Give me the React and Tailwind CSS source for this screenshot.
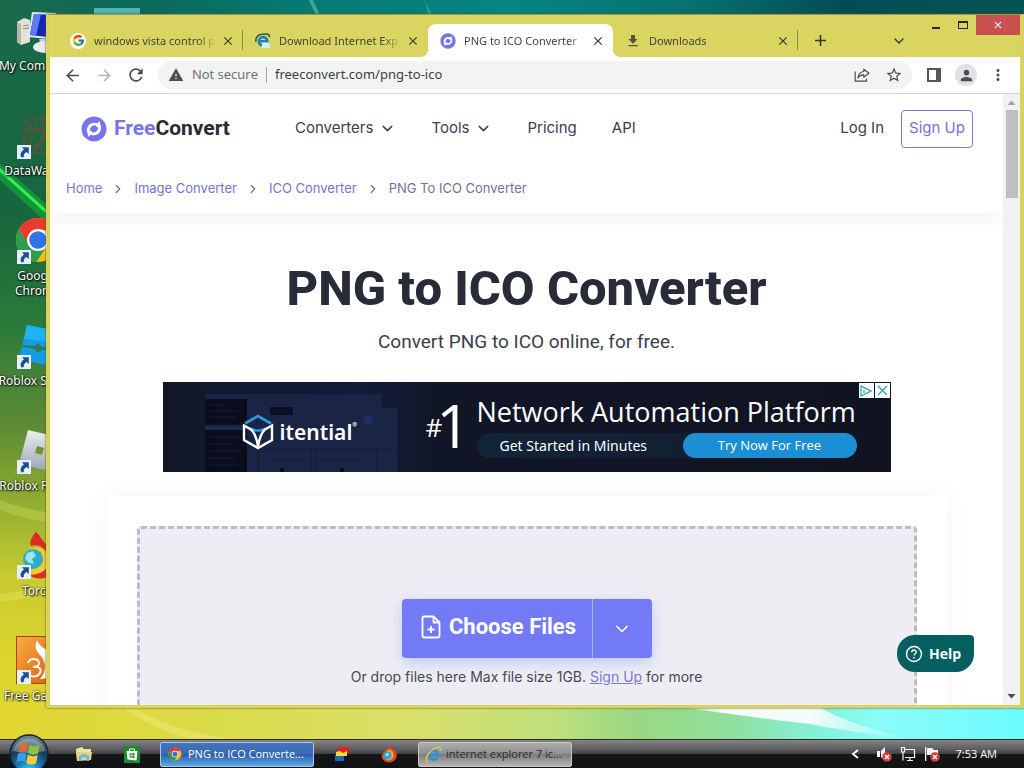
import React from "react";
import {
  MdArrowBack, MdArrowForward, MdRefresh, MdWarning, MdStarBorder, MdPerson,
  MdMoreVert, MdDownload, MdClose, MdAdd,
} from "react-icons/md";
import { FcGoogle } from "react-icons/fc";
import { ChevronDown, ChevronRight } from "lucide-react";

function Wallpaper() {
  return (
    <svg className="absolute inset-0 h-full w-full" viewBox="0 0 1024 768" preserveAspectRatio="none" aria-hidden="true">
      <defs>
        <linearGradient id="wpLeft" x1="0" y1="0" x2="0" y2="1">
          <stop offset="0" stopColor="#1a6a4b" />
          <stop offset="0.28" stopColor="#17663f" />
          <stop offset="0.42" stopColor="#2b7a3b" />
          <stop offset="0.56" stopColor="#5f8c35" />
          <stop offset="0.66" stopColor="#94b030" />
          <stop offset="0.75" stopColor="#c8ca30" />
          <stop offset="0.85" stopColor="#dcd42e" />
          <stop offset="1" stopColor="#e2d630" />
        </linearGradient>
        <linearGradient id="wpTop" x1="0" y1="0" x2="1" y2="0">
          <stop offset="0" stopColor="#1a6a4b" />
          <stop offset="0.15" stopColor="#0b6a5c" />
          <stop offset="0.3" stopColor="#067a74" />
          <stop offset="0.5" stopColor="#068582" />
          <stop offset="0.68" stopColor="#06706f" />
          <stop offset="0.82" stopColor="#024d55" />
          <stop offset="1" stopColor="#055453" />
        </linearGradient>
        <linearGradient id="wpBottom" x1="0" y1="0" x2="1" y2="0">
          <stop offset="0" stopColor="#e2d630" />
          <stop offset="0.2" stopColor="#dbdb48" />
          <stop offset="0.4" stopColor="#d9e06a" />
          <stop offset="0.54" stopColor="#bfe07c" />
          <stop offset="0.62" stopColor="#9ad882" />
          <stop offset="0.72" stopColor="#90e0a0" />
          <stop offset="0.8" stopColor="#84f2dc" />
          <stop offset="0.86" stopColor="#8afcf8" />
          <stop offset="1" stopColor="#6cfbff" />
        </linearGradient>
        <linearGradient id="wpBeam" x1="0" y1="0" x2="1" y2="0">
          <stop offset="0" stopColor="#fff" stopOpacity="0" />
          <stop offset="0.25" stopColor="#fff" stopOpacity="0.9" />
          <stop offset="0.6" stopColor="#fff" stopOpacity="0.9" />
          <stop offset="1" stopColor="#fff" stopOpacity="0" />
        </linearGradient>
      </defs>
      <rect width="1024" height="768" fill="url(#wpLeft)" />
      <rect x="0" width="1024" height="15" fill="url(#wpTop)" />
      <path d="M313 0L320 15H316L309 0Z" fill="#5fb5ae" opacity="0.7" />
      <path d="M425 0L432 15H428Z" fill="#40a8a4" opacity="0.6" />
      <path d="M0 164L60 216V235L0 180Z" fill="#12a838" opacity="0.7" />
      <path d="M0 168L60 222V226L0 172Z" fill="#35ee55" />
      <path d="M0 500Q25 510 60 514V524Q25 520 0 510Z" fill="#dbe46a" opacity="0.3" />
      <path d="M0 594Q30 592 60 580V586Q30 600 0 602Z" fill="#eef070" opacity="0.3" />
      <rect y="700" width="1024" height="68" fill="url(#wpBottom)" />
      <path d="M130 706Q170 730 230 739H190Q150 728 120 706Z" fill="#eef088" opacity="0.4" />
      <path d="M660 704H815Q840 722 910 739Q850 732 810 724Q740 716 660 704Z" fill="url(#wpBeam)" />
    </svg>
  );
}

function ShortcutArrow() {
  return (
    <svg className="absolute bottom-0 left-[3px] h-3.5 w-3.5" viewBox="0 0 14 14" aria-hidden="true">
      <rect width="14" height="14" fill="#e3f1fa" />
      <path d="M5 2.2H11.8V9L9.6 6.9C7.4 8 6.6 9.4 6.8 12L4.6 12.4C2.6 9.6 3.8 6.6 7 4.4Z" fill="#1f4f93" />
    </svg>
  );
}

function ComputerArt() {
  return (
    <svg className="h-12 w-12" viewBox="0 0 48 48" aria-hidden="true">
      <path d="M3 16L10 12L16 14V36L7 39L3 36Z" fill="#e4e2d4" />
      <path d="M3 16L7 18V39L3 36Z" fill="#b8b6a6" />
      <path d="M9 20L15 19M9 23L15 22" stroke="#8b8a7c" />
      <path d="M18 6L42 7L45 34L14 31Z" fill="#dfe6f2" />
      <path d="M20 8L41 9L43 32L16 29Z" fill="#1226b8" />
      <path d="M20 8L27 8L22 30L16 29Z" fill="#5b7df0" />
      <path d="M25 33H37V40H27Z" fill="#c9ccd2" />
      <ellipse cx="32" cy="41" rx="13" ry="6" fill="#e9eaee" />
    </svg>
  );
}

function DataArt() {
  return (
    <svg className="h-12 w-12" viewBox="0 0 48 48" fill="none" stroke="#a63b2c" strokeWidth="1" aria-hidden="true">
      <path d="M10 8L18 14L14 20L24 17L20 8L30 6L28 15L40 10M8 18L14 20L9 28L18 26L24 17L31 22L28 15M18 26L14 36L24 34L31 22L40 20M24 34L30 42L38 34L31 22M9 28L14 36L8 32M24 34L18 42L30 42M20 8L14 5M30 6L36 3" strokeDasharray="3 1" />
      <path d="M12 12L26 26L36 28M20 22L34 16M16 30L30 30M6 14L16 8M6 24L12 30M22 38L34 38" strokeDasharray="2 2" />
    </svg>
  );
}

function ChromeArt({ className }) {
  return (
    <svg className={className} viewBox="0 0 48 48" aria-hidden="true">
      <circle cx="24" cy="24" r="22" fill="#fbbc16" />
      <path d="M4.9 13A22 22 0 0 1 43.1 13L43.5 14H24L14.5 29Z" fill="#ea3b2e" />
      <path d="M4.9 13A22 22 0 0 0 22.5 46L33 29.5L24 34L15 29Z" fill="#2f9e4c" />
      <circle cx="24" cy="24" r="11" fill="#fff" />
      <circle cx="24" cy="24" r="8.8" fill="#2f73e8" />
    </svg>
  );
}

function StudioArt() {
  return (
    <svg className="h-12 w-12" viewBox="0 0 48 48" aria-hidden="true">
      <path d="M13 4L48 11L41 46L5 38Z" fill="#149ce8" />
      <path d="M13 4L48 11L46 22L10 18Z" fill="#20b2f4" />
      <path d="M9 24L20 25L24 22L28 26L46 27V29L28 29L24 32L20 28L8 26Z" fill="#2b7d54" />
    </svg>
  );
}

function PlayerArt() {
  return (
    <svg className="h-12 w-12" viewBox="0 0 48 48" aria-hidden="true">
      <defs>
        <linearGradient id="plr" x1="0" y1="0" x2="0" y2="1">
          <stop offset="0" stopColor="#eceef0" />
          <stop offset="1" stopColor="#9aa3b2" />
        </linearGradient>
      </defs>
      <path fillRule="evenodd" d="M14 4L48 12L40 46L5 38ZM23 20L21 27L28 29L30 22Z" fill="url(#plr)" />
    </svg>
  );
}

function TorchArt({ className }) {
  return (
    <svg className={className} viewBox="0 0 48 48" aria-hidden="true">
      <path d="M22 1C18 6 15 10 17 15C26 12 36 20 34 32C32 42 22 44 15 44C26 52 44 46 44 30C44 18 34 16 30 11C27 8 26 4 22 1Z" fill="#dd2a22" />
      <path d="M14 18C28 12 40 24 33 36C28 44 18 44 12 40C26 40 32 28 26 21Z" fill="#f6c832" />
      <circle cx="19" cy="28" r="10" fill="#28afc6" />
      <path d="M13 22L19 20L22 25L18 28L20 33L15 32L11 28Z" fill="#9fe4ec" />
    </svg>
  );
}

function TorchMark() {
  return (
    <svg className="h-[17px] w-[17px]" viewBox="0 0 17 17" aria-hidden="true">
      <path d="M8 0.500C10 3 14 3 15.500 7C17 12 13 16.500 8 16.500C4 16.500 1 14 0.500 10C3 4 6 5 8 0.500Z" fill="#e0451e" />
      <path d="M6 4C11 3 13.500 7 12.500 11C11.500 14 8 15 5 14Z" fill="#f7a02c" />
      <circle cx="6.500" cy="9.500" r="4" fill="#2aa8dc" />
      <path d="M4.500 8L7 7L8 9L5.500 10.500Z" fill="#a5e6f2" />
    </svg>
  );
}

function GameArt() {
  return (
    <svg className="h-12 w-12" viewBox="0 0 48 48" aria-hidden="true">
      <defs>
        <linearGradient id="gm" x1="0" y1="0" x2="1" y2="1">
          <stop offset="0" stopColor="#f7ad45" />
          <stop offset="1" stopColor="#dc5608" />
        </linearGradient>
      </defs>
      <rect x="2.5" y="0.5" width="45" height="47" fill="url(#gm)" stroke="#a8450f" />
      <path d="M23 4C20 11 22 15 27 20C32 26 33 35 26 43C38 43 44 34 42 24C40 14 26 14 23 4Z" fill="#fff" />
      <path d="M14 27C16 21 26 22 25 28C24 31 21 31 19 31C25 30 28 33 26 37C23 42 15 41 14 37" fill="none" stroke="#fff" strokeWidth="2" />
    </svg>
  );
}

const desktopIcons = [
  { label: "My Computer", art: <ComputerArt />, shortcut: false },
  { label: "DataWagon", art: <DataArt />, shortcut: true },
  { label: "Google Chrome", art: <ChromeArt className="h-12 w-12" />, shortcut: true },
  { label: "Roblox Studio", art: <StudioArt />, shortcut: true },
  { label: "Roblox Player", art: <PlayerArt />, shortcut: true },
  { label: "Torch", art: <TorchArt className="h-12 w-12" />, shortcut: true },
  { label: "Free Games", art: <GameArt />, shortcut: true },
];

function DesktopIcon({ label, art, shortcut }) {
  const wraps = label === "Google Chrome";
  return (
    <li className="flex h-[105px] w-[75px] shrink-0 flex-col items-center pt-0.5">
      <div className="relative h-12 w-12">
        {art}
        {shortcut && <ShortcutArrow />}
      </div>
      <span className={`mt-1 text-center font-['Noto_Sans'] text-[12px] leading-[15px] text-white [text-shadow:1px_1px_2px_#000,0_0_2px_#000] ${wraps ? "w-12" : "min-w-[71px] text-center whitespace-nowrap"}`}>
        {label}
      </span>
    </li>
  );
}

function SiteMark({ className }) {
  return (
    <svg className={className} viewBox="0 0 26 26" aria-hidden="true">
      <circle cx="13" cy="13" r="12.5" fill="#7775ea" />
      <path d="M6 15.500C5 9.500 10.500 5 16.500 7.200L18.500 5L20 11L14 11.500L15.300 9.600C11.500 9.200 8.500 11.500 8.600 16Z" fill="#fff" />
      <path d="M20 10.500C21 16.500 15.500 21 9.500 18.800L7.500 21L6 15L12 14.500L10.700 16.400C14.500 16.800 17.500 14.500 17.400 10Z" fill="#fff" />
      <circle cx="13" cy="13" r="3.300" fill="#7775ea" />
    </svg>
  );
}

function ExplorerMark({ className }) {
  return (
    <svg className={className} viewBox="0 0 16 16" aria-hidden="true">
      <path d="M11.8 10.6A4.3 4.3 0 1 1 12.4 8.2H4.4" fill="none" stroke="#2b8fdc" strokeWidth="2.3" />
      <path d="M2 14.6C-1 13 3.6 4.6 9.6 2C13 0.4 15.6 1 14.6 4.2" fill="none" stroke="#e9c23a" strokeWidth="1.4" />
    </svg>
  );
}

function DownloadPageMark() {
  return (
    <svg className="h-4 w-4" viewBox="0 0 16 16" aria-hidden="true">
      <circle cx="8" cy="8" r="6" fill="#bfe0c8" />
      <path d="M11.8 10.6A4.3 4.3 0 1 1 12.4 8.2H4.4" fill="none" stroke="#1f7fae" strokeWidth="2.600" />
      <path d="M1 9C0 4 4 1 8 1.2C12 0.6 15 1 14.4 4.4" fill="none" stroke="#2f5a3a" strokeWidth="1.5" />
      <path d="M7 12.6C6.6 10 9 9 10.6 10C12 8.6 15 10 14.6 12.4C16.4 13 15.8 15 14.4 15H8C6.4 15 5.8 13.4 7 12.6Z" fill="#d5edf3" />
    </svg>
  );
}

const tabs = [
  { title: "windows vista control p", icon: <span className="flex h-4 w-4 items-center justify-center rounded-full bg-white"><FcGoogle size={13} /></span> },
  { title: "Download Internet Exp", icon: <DownloadPageMark /> },
  { title: "PNG to ICO Converter", icon: <SiteMark className="h-4 w-4" />, active: true },
  { title: "Downloads", icon: <MdDownload size={16} className="text-[#5c5340]" /> },
];

function Tab({ title, icon, active, separator }) {
  return (
    <div className={`relative flex h-full w-[185px] min-w-0 shrink items-center pr-[7px] pl-3 ${active ? "rounded-t-lg bg-white" : ""}`}>
      {active && (
        <>
          <span className="absolute bottom-0 -left-2 h-2 w-2 bg-[radial-gradient(circle_at_0_0,transparent_8px,#fff_8px)]" />
          <span className="absolute -right-2 bottom-0 h-2 w-2 bg-[radial-gradient(circle_at_100%_0,transparent_8px,#fff_8px)]" />
        </>
      )}
      <span className="shrink-0">{icon}</span>
      <span className="ml-2 min-w-0 flex-1 overflow-hidden font-['Noto_Sans'] text-[11px] leading-4 whitespace-nowrap text-[#46443a] [mask-image:linear-gradient(to_right,#000_86%,transparent)]">
        {title}
      </span>
      <button type="button" aria-label={`Close ${title}`} className="ml-1 flex h-4 w-4 shrink-0 items-center justify-center text-[#3a3626]">
        <MdClose size={14} />
      </button>
      {separator && <span className="absolute top-1.5 right-0 h-5 w-px bg-[#8f8a4c]" />}
    </div>
  );
}

function TabStrip() {
  return (
    <div className="flex h-[42px] shrink-0">
      <div className="flex min-w-0 flex-1 items-center pt-[9px] pl-2">
        {tabs.map((t, i) => (
          <Tab key={t.title} {...t} separator={i === 0 || i === 3} />
        ))}
        <button type="button" aria-label="New tab" className="ml-3 flex h-5 w-5 shrink-0 items-center justify-center text-[#3a3420]">
          <MdAdd size={19} />
        </button>
        <button type="button" aria-label="Search tabs" className="mr-[9px] ml-auto flex h-7 w-7 shrink-0 items-center justify-center text-[#3a3420]">
          <ChevronDown size={16} />
        </button>
      </div>
      <div className="flex h-5 shrink-0">
        <button type="button" aria-label="Minimize" className="flex w-[27px] items-end justify-center pb-1.5">
          <span className="h-0.5 w-2 bg-[#2a2613]" />
        </button>
        <button type="button" aria-label="Maximize" className="flex w-[27px] items-center justify-center">
          <span className="h-2 w-2.5 border border-t-2 border-[#2a2613]" />
        </button>
        <button type="button" aria-label="Close window" className="flex w-11 items-center justify-center bg-[#c94f50] text-white">
          <MdClose size={12} />
        </button>
      </div>
    </div>
  );
}

function ShareIcon() {
  return (
    <svg width="16" height="16" viewBox="0 0 16 16" fill="none" stroke="currentColor" strokeWidth="1.2" aria-hidden="true">
      <path d="M1.2 4.5V14.2H12.5V11.5" />
      <path d="M9.8 2.2L15 6.2L9.8 10.2V7.9C7 7.9 5.2 8.8 4 11C4.3 7.4 6.4 4.8 9.8 4.5Z" strokeLinejoin="round" />
    </svg>
  );
}

const toolButton = "flex h-8 w-8 shrink-0 items-center justify-center";

function Toolbar() {
  return (
    <div className="flex h-[37px] shrink-0 items-center border-b border-[#d3d6d9] bg-white pr-1.5 pl-1.5 text-[#4a4d51]">
      <button type="button" aria-label="Back" className={toolButton}><MdArrowBack size={19} /></button>
      <button type="button" aria-label="Forward" className={`${toolButton} text-[#b4b4b4]`}><MdArrowForward size={19} /></button>
      <button type="button" aria-label="Reload" className={toolButton}><MdRefresh size={20} /></button>
      <div className="mx-1.5 flex h-7 min-w-0 flex-1 items-center rounded-full bg-[#f1f3f4] pr-0.5 pl-2.5 text-[13px]">
        <MdWarning size={16} className="shrink-0" />
        <span className="ml-2 whitespace-nowrap text-[#66696d]">Not secure</span>
        <span className="mx-2 h-4 w-px shrink-0 bg-[#a5a8ab]" />
        <input
          type="text"
          aria-label="Address"
          defaultValue="freeconvert.com/png-to-ico"
          className="min-w-0 flex-1 bg-transparent font-['Noto_Sans'] text-[#3b3e42] outline-none"
        />
        <button type="button" aria-label="Share" className={toolButton}><ShareIcon /></button>
        <button type="button" aria-label="Bookmark" className={toolButton}><MdStarBorder size={18} /></button>
      </div>
      <button type="button" aria-label="Side panel" className={toolButton}>
        <span className="h-3.5 w-3.5 border-2 border-r-[5px] border-[#54575b]" />
      </button>
      <button type="button" aria-label="Profile" className={toolButton}>
        <span className="flex h-[22px] w-[22px] items-center justify-center rounded-full bg-[#dfe1e7]"><MdPerson size={17} /></span>
      </button>
      <button type="button" aria-label="Menu" className={toolButton}><MdMoreVert size={18} /></button>
    </div>
  );
}

function SiteHeader() {
  return (
    <header className="shadow-[0_8px_16px_rgba(80,80,80,0.06)]">
      <div className="flex h-[69px] items-center pr-[30px] pl-[31px] text-[15px] text-[#3c404b]">
        <a href="#home" className="flex items-center gap-[7px] font-['Roboto'] text-[21px] font-bold text-[#282b34]">
          <SiteMark className="h-[26px] w-[26px]" />
          <span><span className="text-[#7775e2]">Free</span>Convert</span>
        </a>
        <nav className="ml-[65px] flex items-center gap-[35px] whitespace-nowrap">
          <a href="#converters" className="flex items-center gap-1.5">Converters <ChevronDown size={17} /></a>
          <a href="#tools" className="flex items-center gap-1.5">Tools <ChevronDown size={17} /></a>
          <a href="#pricing">Pricing</a>
          <a href="#api">API</a>
        </nav>
        <a href="#login" className="ml-auto whitespace-nowrap">Log In</a>
        <a href="#signup" className="ml-[17px] flex h-[38px] w-[72px] items-center justify-center rounded border border-[#7c7ad0] whitespace-nowrap text-[#7572d8]">
          Sign Up
        </a>
      </div>
      <nav aria-label="Breadcrumb" className="flex h-[50px] items-center pt-px pl-4 text-[13px] whitespace-nowrap text-[#7674cf]">
        <a href="#home">Home</a>
        <ChevronRight size={14} className="mx-[9px] text-[#6f7388]" />
        <a href="#image">Image Converter</a>
        <ChevronRight size={14} className="mx-[9px] text-[#6f7388]" />
        <a href="#ico">ICO Converter</a>
        <ChevronRight size={14} className="mx-[9px] text-[#6f7388]" />
        <span className="text-[#6f7394]">PNG To ICO Converter</span>
      </nav>
    </header>
  );
}

function AdBackdrop() {
  return (
    <svg className="absolute inset-0 h-full w-full" viewBox="0 0 728 90" preserveAspectRatio="xMinYMin slice" aria-hidden="true">
      <defs>
        <linearGradient id="adbg" x1="0" y1="0" x2="1" y2="0">
          <stop offset="0" stopColor="#121726" />
          <stop offset="0.12" stopColor="#101a34" />
          <stop offset="0.28" stopColor="#121b38" />
          <stop offset="0.38" stopColor="#111627" />
          <stop offset="1" stopColor="#111321" />
        </linearGradient>
      </defs>
      <rect width="728" height="90" fill="url(#adbg)" />
      <path d="M42 12H219V26H234V90H42Z" fill="#1a2444" />
      <path d="M42 17H84V43H42ZM42 48H84V90H42Z" fill="#0a0e1c" />
      <path d="M42 46H84" stroke="#182d5c" strokeWidth="2" />
      <path d="M46 23H62M46 29H76M46 35H72M46 55H78M46 62H70M46 69H78M46 76H72M46 83H76" stroke="#161d34" />
      <rect x="107" y="25" width="23" height="8" rx="1" fill="#0b1022" />
      <circle cx="205" cy="38" r="5" fill="#1b2e66" />
      <path d="M86 67H234M148 67V90M152 67V90M214 67V90M95 67V90M110 78H140M158 78H202M95 62V88" stroke="#141c38" />
      <circle cx="119" cy="88" r="2" fill="#080c18" />
      <circle cx="179" cy="88" r="2" fill="#080c18" />
    </svg>
  );
}

function AdBanner() {
  return (
    <aside className="relative mx-auto mt-[26px] flex h-[90px] w-[728px] max-w-full overflow-hidden bg-[#111321] text-white">
      <AdBackdrop />
      <div className="relative flex w-[263px] shrink-0 items-center gap-1.5 pt-2.5 pl-[79px]">
        <svg className="h-9 w-8 shrink-0" viewBox="0 0 32 36" fill="none" aria-hidden="true">
          <path d="M3 9.500L16 2L29 9.500" stroke="#2c9be0" strokeWidth="2.600" />
          <path d="M8 14.500L14 16.500H18L24 14.500" stroke="#2c9be0" strokeWidth="2.600" />
          <path d="M2 11.500L9 15.500C12 18 14.500 24 16 32C17.500 24 20 18 23 15.500L30 11.500V26L16 34L2 26Z" stroke="#fff" strokeWidth="2.400" />
        </svg>
        <span className="font-['Noto_Sans'] text-[21px] leading-6 font-semibold">itential</span>
        <span className="-ml-1.5 self-start pt-7 text-[7px] leading-3">®</span>
      </div>
      <div className="relative flex w-[49px] shrink-0 items-center font-['Open_Sans']">
        <span className="text-[26px]">#</span>
        <span className="-ml-1.5 pb-1 font-['Open_Sans'] text-[60px] leading-none">1</span>
      </div>
      <div className="relative flex min-w-0 flex-1 flex-col pt-4 pr-[34px] pl-0.5">
        <div className="font-['Open_Sans'] text-[27px] leading-7 whitespace-nowrap">Network Automation Platform</div>
        <div className="mt-[7px] flex h-[25px] items-center rounded-full bg-[linear-gradient(to_right,#122438,#111b2e)] pl-[23px] font-['Noto_Sans'] text-[14px]">
          <span className="whitespace-nowrap">Get Started in Minutes</span>
          <a href="#try" className="ml-auto flex h-[25px] w-[174px] items-center justify-center rounded-full bg-[#1b8fd4] font-['Open_Sans'] text-[13px] font-medium whitespace-nowrap">Try Now For Free</a>
        </div>
      </div>
      <div className="absolute top-px right-px flex gap-px">
        <button type="button" aria-label="Ad information" className="flex h-[15px] w-[15px] items-center justify-center bg-white">
          <svg width="12" height="12" viewBox="0 0 12 12" fill="none" stroke="#20a5b2" strokeWidth="1.200" aria-hidden="true">
            <path d="M1 1L11 6L1 11ZM4 5V8M4 3.500V4" />
          </svg>
        </button>
        <button type="button" aria-label="Close ad" className="flex h-[15px] w-[15px] items-center justify-center bg-white text-[#20a5b2]">
          <svg width="11" height="11" viewBox="0 0 11 11" stroke="currentColor" strokeWidth="1.300" aria-hidden="true"><path d="M1 1L10 10M10 1L1 10" /></svg>
        </button>
      </div>
    </aside>
  );
}

function FileAddIcon() {
  return (
    <svg width="20" height="24" viewBox="0 0 20 24" fill="none" stroke="currentColor" strokeWidth="1.800" strokeLinejoin="round" aria-hidden="true">
      <path d="M12.500 1.500H3A1.500 1.500 0 0 0 1.500 3V21A1.500 1.500 0 0 0 3 22.500H17A1.500 1.500 0 0 0 18.500 21V7.500Z" />
      <path d="M12.500 1.500V7.500H18.500M10 11V18M6.500 14.500H13.500" />
    </svg>
  );
}

function UploadCard() {
  return (
    <section className="mx-auto mt-6 w-[840px] max-w-full bg-white p-[30px] shadow-[0_0_20px_rgba(60,60,80,0.06)]">
      <div className="flex h-[400px] flex-col items-center rounded border-[3px] border-dashed border-[#bdbbc6] bg-[#eeedf3] pt-[70px]">
        <div className="flex h-[59px] w-[250px] rounded bg-[#737af6] text-white shadow-[0_4px_14px_rgba(110,150,250,0.4)]">
          <button type="button" className="flex flex-1 items-center justify-center gap-2 border-r border-[#a9adfa] pb-1 pl-1 font-['Roboto'] text-[22px] font-bold whitespace-nowrap">
            <FileAddIcon />
            Choose Files
          </button>
          <button type="button" aria-label="More sources" className="flex w-[59px] items-center justify-center">
            <ChevronDown size={20} />
          </button>
        </div>
        <p className="mt-[7px] text-[14px] leading-6 whitespace-nowrap text-[#454957]">
          Or drop files here Max file size 1GB. <a href="#signup" className="text-[#7a78da] underline">Sign Up</a> for more
        </p>
      </div>
    </section>
  );
}

function PageScrollbar() {
  return (
    <div className="flex w-[17px] shrink-0 flex-col items-center bg-[#f1f1f1]" aria-hidden="true">
      <svg width="9" height="16" viewBox="0 0 9 16"><path d="M0.500 11L4.500 6.500L8.500 11Z" fill="#a3a3a3" /></svg>
      <div className="h-[88px] w-3 bg-[#bfbfbf]" />
      <svg className="mt-auto" width="9" height="17" viewBox="0 0 9 17"><path d="M0.500 6L4.500 10.500L8.500 6Z" fill="#4c4c4c" /></svg>
    </div>
  );
}

function BrowserWindow() {
  return (
    <div className="relative mt-3.5 mb-[31px] flex min-w-0 flex-1 flex-col border-t border-r-4 border-b-[3px] border-l-4 border-[#d9d25f] border-t-[#9a9b4a] bg-[#dad460] shadow-[0_0_2px_#55501c]">
      <TabStrip />
      <Toolbar />
      <div className="flex min-h-0 flex-1">
        <main className="relative min-w-0 flex-1 overflow-hidden bg-white font-['Inter']">
          <SiteHeader />
          <h1 className="mt-[47px] text-center font-['Roboto'] text-[49px] leading-[58px] font-extrabold text-[#282c38]">PNG to ICO Converter</h1>
          <p className="mt-2.5 text-center font-['Roboto'] text-[19px] leading-7 text-[#3c404b]">Convert PNG to ICO online, for free.</p>
          <AdBanner />
          <UploadCard />
          <button type="button" className="absolute right-[29px] bottom-[33px] flex h-[37px] w-[77px] items-center gap-1.5 rounded-[18px] rounded-tr-[4px] bg-[#055f61] pl-2 font-['Open_Sans'] text-[14px] font-bold text-white">
            <svg width="18" height="18" viewBox="0 0 18 18" fill="none" stroke="#fff" strokeWidth="1.400" aria-hidden="true">
              <circle cx="9" cy="9" r="7.500" />
              <path d="M6.800 7.200C6.800 4.200 11.200 4.300 11.200 7C11.200 8.800 9 8.600 9 10.600M9 12V13.500" />
            </svg>
            Help
          </button>
        </main>
        <PageScrollbar />
      </div>
    </div>
  );
}

function StartOrb() {
  return (
    <button type="button" aria-label="Start" className="absolute bottom-[-6px] left-[9px] h-10 w-10">
      <svg className="h-full w-full" viewBox="0 0 40 40" aria-hidden="true">
        <defs>
          <radialGradient id="orb" cx="0.5" cy="0.95" r="0.9">
            <stop offset="0" stopColor="#3bd8f5" />
            <stop offset="0.35" stopColor="#1878b4" />
            <stop offset="0.7" stopColor="#19384f" />
            <stop offset="1" stopColor="#6d8797" />
          </radialGradient>
        </defs>
        <circle cx="20" cy="20" r="19" fill="url(#orb)" stroke="#10222e" strokeWidth="1.5" />
        <path d="M4 17A16.500 16.500 0 0 1 36 17Q20 21 4 17Z" fill="#fff" opacity="0.3" />
        <path d="M11 11Q15 7 19 10L17.500 18.500Q14 16 9.500 18.500Z" fill="#e66a30" />
        <path d="M20.500 10.500Q25 13.500 30.500 11L29 19.500Q24 22 19 19Z" fill="#8bc442" />
        <path d="M9 20Q13.500 17.500 17.300 20L16 28Q12 26 7.500 28.500Z" fill="#3b9be8" />
        <path d="M18.800 20.500Q24 23.500 28.700 21L27 29.500Q22 32 17.300 29Z" fill="#f7cc38" />
      </svg>
    </button>
  );
}

function FolderMark() {
  return (
    <svg width="18" height="17" viewBox="0 0 18 17" aria-hidden="true">
      <path d="M1 3L7 1L9 3L16 3V14L2 15Z" fill="#f2e2a0" />
      <path d="M1 6H17L16 14H2Z" fill="#ead27c" />
      <path d="M4 15V10Q9 6 14 10V15H11.500V11.500H6.500V15Z" fill="#6fb8e4" />
    </svg>
  );
}

function StoreMark() {
  return (
    <svg width="18" height="17" viewBox="0 0 18 17" aria-hidden="true">
      <rect x="1" width="16" height="17" fill="#1a8a2b" />
      <path d="M6.500 5V3H11.500V5" fill="none" stroke="#fff" />
      <path d="M3.500 5H14.500L13.500 14.500L4.500 13.500Z" fill="#fff" />
      <path d="M6.500 7.500L11.500 7V12L6.500 11.500Z" fill="#1a8a2b" />
      <path d="M8.800 7V12M6.500 9.500H11.500" stroke="#fff" strokeWidth="0.600" />
    </svg>
  );
}

function BlocksMark() {
  return (
    <svg width="16" height="16" viewBox="0 0 16 16" aria-hidden="true">
      <path d="M4 1H15V7H4Z" fill="#e02020" />
      <path d="M1 9H10V15H1Z" fill="#1c62c8" />
      <path d="M2 6L6 5L9 7L13 5V10H2Z" fill="#f8dc2c" />
    </svg>
  );
}

function Taskbar() {
  return (
    <footer className="relative flex h-[29px] shrink-0 items-center border-t border-[#2b2d22] bg-[linear-gradient(to_bottom,#858585_0,#606062_30%,#454648_48%,#17181a_50%,#101113_100%)] pr-[27px] pl-[75px] text-[11px] text-white">
      <StartOrb />
      <button type="button" aria-label="File Explorer" className="flex w-[18px] shrink-0 justify-center"><FolderMark /></button>
      <button type="button" aria-label="Store" className="ml-[30px] flex w-[18px] shrink-0 justify-center"><StoreMark /></button>
      <button type="button" className="ml-[19px] flex h-[25px] w-[154px] shrink-0 items-center gap-1.5 rounded-xs border border-[#a5c8ea] bg-[linear-gradient(to_bottom,#4474bd_0,#3b69b4_48%,#2c5ea9_50%,#5aa9e6_100%)] pl-[7px] whitespace-nowrap">
        <ChromeArt className="h-3.5 w-3.5" />
        PNG to ICO Converte...
      </button>
      <button type="button" aria-label="Blocks" className="ml-5 shrink-0"><BlocksMark /></button>
      <button type="button" aria-label="Torch" className="ml-[31px] shrink-0"><TorchMark /></button>
      <button type="button" className="ml-5 flex h-[25px] w-[154px] shrink-0 items-center gap-1 rounded-xs border border-[#c8c8c8] bg-[linear-gradient(to_bottom,#adadad_0,#8e8e8e_48%,#7c7c7c_50%,#b4b4b4_100%)] pl-1.5 whitespace-nowrap text-[#2a2a2a]">
        <ExplorerMark className="h-[17px] w-[17px]" />
        internet explorer 7 ic...
      </button>
      <div className="ml-auto flex items-center gap-2">
        <button type="button" aria-label="Show hidden icons" className="mr-2">
          <svg width="10" height="12" viewBox="0 0 10 12" fill="none" stroke="#fff" strokeWidth="2" aria-hidden="true"><path d="M8 2L3 6L8 10" /></svg>
        </button>
        <button type="button" aria-label="Volume muted">
          <svg width="16" height="16" viewBox="0 0 16 16" aria-hidden="true">
            <path d="M1 5H4V11H1ZM5 5L9 1V15L5 11Z" fill="#f4f4f4" />
            <circle cx="11" cy="11" r="4.800" fill="#d8393a" />
            <path d="M9 9L13 13M13 9L9 13" stroke="#fff" strokeWidth="1.400" />
          </svg>
        </button>
        <button type="button" aria-label="Network">
          <svg width="16" height="16" viewBox="0 0 16 16" fill="none" stroke="#f4f4f4" strokeWidth="1.200" aria-hidden="true">
            <path d="M5 3.500H14.500V11.500H5M10 11.500V14M7 14.500H13M1.500 1.500H4.500V6H1.500ZM3 6V14.500" />
          </svg>
        </button>
        <button type="button" aria-label="Action center">
          <svg width="16" height="16" viewBox="0 0 16 16" aria-hidden="true">
            <path d="M1 1H2.300V15H1ZM3 2H8L10 4H14V9H3Z" fill="#f4f4f4" />
            <circle cx="11" cy="11" r="4.800" fill="#d8393a" />
            <path d="M9 9L13 13M13 9L9 13" stroke="#fff" strokeWidth="1.400" />
          </svg>
        </button>
        <time className="ml-2 whitespace-nowrap">7:53 AM</time>
      </div>
    </footer>
  );
}

export default function App() {
  return (
    <div className="relative flex h-screen flex-col overflow-hidden font-['Open_Sans','Noto_Sans',sans-serif]">
      <Wallpaper />
      <div className="absolute top-2 left-[94px] h-4 w-[46px] bg-[#4fb5bd]" />
      <div className="relative flex min-h-0 flex-1">
        <ul className="flex w-[46px] shrink-0 flex-col pt-1">
          {desktopIcons.map((d) => (
            <DesktopIcon key={d.label} {...d} />
          ))}
        </ul>
        <BrowserWindow />
      </div>
      <Taskbar />
    </div>
  );
}
